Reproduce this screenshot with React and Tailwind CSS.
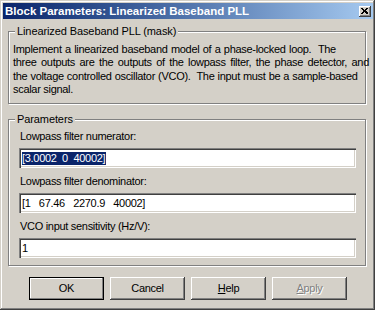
import React from 'react';

const font = { fontFamily: '"Liberation Sans", Arial, sans-serif' };

const raised =
  'shadow-[inset_-1px_-1px_0_#404040,inset_1px_1px_0_#ffffff,inset_-2px_-2px_0_#808080]';
const sunken =
  'shadow-[inset_1px_1px_0_#808080,inset_2px_2px_0_#404040,inset_-1px_-1px_0_#ffffff,inset_-2px_-2px_0_#d4d0c8]';

const GroupBox = ({ label, className, children }) => (
  <div
    className={`relative border border-[#808080] shadow-[inset_1px_1px_0_#ffffff,1px_1px_0_#ffffff] ${className}`}
  >
    <span className="absolute left-[6px] top-[-7px] bg-[#d4d0c8] px-[2px] leading-[13px] tracking-[-0.1px]">
      {label}
    </span>
    {children}
  </div>
);

const Field = ({ label, value, selected, first }) => (
  <div className={first ? '' : 'mt-[7px]'}>
    <div className="leading-[13px] pl-[1px]">{label}</div>
    <div className={`mt-[5px] w-[337px] h-[20px] bg-white flex items-center pl-[3px] ${sunken}`}>
      {selected ? (
        <span className="whitespace-pre bg-[#0a246a] text-white leading-[13px] pr-[1px]">{value}</span>
      ) : (
        <span className="whitespace-pre leading-[13px]">{value}</span>
      )}
    </div>
  </div>
);

const Button = ({ children, isDefault, disabled }) => (
  <button
    type="button"
    className={`w-[75px] h-[23px] bg-[#d4d0c8] flex items-center justify-center ${
      isDefault ? 'border border-black' : ''
    }`}
  >
    <span
      className={`w-full h-full flex items-center justify-center leading-[13px] ${
        isDefault
          ? 'shadow-[inset_-1px_-1px_0_#808080,inset_1px_1px_0_#ffffff]'
          : raised
      } ${disabled ? 'text-[#808080] [text-shadow:1px_1px_0_#ffffff]' : 'text-black'}`}
    >
      {children}
    </span>
  </button>
);

export default function App() {
  return (
    <div
      className="w-[375px] h-[310px] bg-[#d4d0c8] pt-[3px] pl-[3px] pr-[2px] pb-[3px] text-[11px] tracking-[-0.3px] text-black shadow-[inset_-1px_-1px_0_#404040,inset_1px_1px_0_#d4d0c8,inset_-2px_-2px_0_#808080,inset_2px_2px_0_#ffffff] overflow-hidden"
      style={font}
    >
      <div className="h-[16px] flex items-center justify-between bg-gradient-to-r from-[#0a246a] to-[#a6caf0] pl-[2px] pr-[2px]">
        <span className="text-white font-bold text-[11.5px] tracking-normal leading-[14px] whitespace-nowrap">
          Block Parameters: Linearized Baseband PLL
        </span>
        <span className={`w-[12px] h-[11px] bg-[#d4d0c8] flex items-center justify-center ${raised}`}>
          <svg width="7" height="6" viewBox="0 0 7 6" className="mb-[1px] mr-[1px]">
            <path d="M0 0h2v1h1v1h1V1h1V0h2v1H6v1H5v1h0v0h1v1h1v1h0v1H5V5H4V4H3v1H2v1H0V5h1V4h1V3h0V2H1V1H0z" fill="#000" />
          </svg>
        </span>
      </div>

      <div className="pl-[5px]">
        <GroupBox label="Linearized Baseband PLL (mask)" className="mt-[12px] w-[358px] h-[73px]">
          <div className="pt-[11px] pl-[4px] leading-[13.3px] whitespace-pre">
            <div className="[word-spacing:0.6px]">
              {'Implement a linearized baseband model of a phase-locked loop.  The'}
            </div>
            <div className="[word-spacing:1.7px]">
              {'three outputs are the outputs of the lowpass filter, the phase detector, and'}
            </div>
            <div className="[word-spacing:0.3px]">
              {'the voltage controlled oscillator (VCO).  The input must be a sample-based'}
            </div>
            <div>{'scalar signal.'}</div>
          </div>
        </GroupBox>

        <GroupBox label="Parameters" className="mt-[15px] w-[358px] h-[147px]">
          <div className="pt-[10px] pl-[10px]">
            <Field first label="Lowpass filter numerator:" value="[3.0002  0  40002]" selected />
            <Field label="Lowpass filter denominator:" value="[1   67.46   2270.9   40002]" />
            <Field label="VCO input sensitivity (Hz/V):" value="1" />
          </div>
        </GroupBox>
      </div>

      <div className="mt-[11px] pl-[26px] flex gap-[6px]">
        <Button isDefault>OK</Button>
        <Button>Cancel</Button>
        <Button>
          <span className="underline">H</span>elp
        </Button>
        <Button disabled>
          <span className="underline">A</span>pply
        </Button>
      </div>
    </div>
  );
}
